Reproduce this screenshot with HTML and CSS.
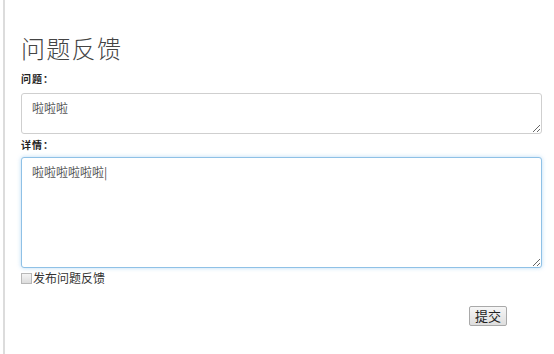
FILE: index.html
```html
<!DOCTYPE html>
<html lang="zh-CN">
<head>
<meta charset="utf-8">
<title>问题反馈</title>
<link rel="stylesheet" href="styles.css">
</head>
<body>
<div class="page">
  <form class="feedback">
    <h1 class="title">问题反馈</h1>
    <label class="field-label label-first">问题：</label>
    <textarea class="field field-short">啦啦啦</textarea>
    <label class="field-label label-next">详情：</label>
    <textarea class="field field-long field-focus">啦啦啦啦啦啦|</textarea>
    <label class="check-row"><span class="check-box"></span>发布问题反馈</label>
    <div class="actions">
      <button type="button" class="submit">提交</button>
    </div>
  </form>
</div>
</body>
</html>
```
FILE: styles.css
```css
html, body {
  margin: 0;
  padding: 0;
  background: #ffffff;
}
body {
  font-family: "Noto Sans CJK SC", "Noto Sans", sans-serif;
  color: #333;
}
.page {
  margin-left: 3px;
  border-left: 2px solid #dcdcdc;
  height: 354px;
  box-sizing: border-box;
  padding: 33px 0 0 16px;
}
.feedback {
  width: 521px;
  display: flex;
  flex-direction: column;
}
.title {
  margin: 0;
  font-size: 24px;
  font-weight: 300;
  line-height: 30px;
  color: #444;
  letter-spacing: 1.3px;
}
.field-label {
  font-size: 10px;
  font-weight: 700;
  line-height: 12px;
  color: #222;
  letter-spacing: 1px;
}
.label-first {
  margin-top: 10px;
}
.label-next {
  margin-top: 5px;
}
.field {
  margin-top: 8px;
  box-sizing: border-box;
  width: 521px;
  border: 1px solid #cfcfcf;
  border-radius: 3px;
  padding: 6px 10px;
  font-family: "Noto Sans CJK SC", sans-serif;
  font-size: 12px;
  line-height: 16px;
  color: #555;
  resize: vertical;
  outline: none;
  background: #fff;
}
.field-short {
  height: 41px;
}
.field-long {
  margin-top: 6px;
  height: 111px;
}
.field-focus {
  border-color: #8fc1e6;
  box-shadow: 0 0 4px rgba(102, 175, 233, 0.45);
}
.check-row {
  display: flex;
  align-items: center;
  margin-top: 2px;
  font-size: 12px;
  line-height: 16px;
  color: #333;
}
.check-box {
  width: 9px;
  height: 9px;
  border: 1px solid #b8b8b8;
  background: linear-gradient(#f4f4f4, #dcdcdc);
  margin-right: 1px;
}
.actions {
  display: flex;
  justify-content: flex-end;
  margin-top: 20px;
  padding-right: 35px;
}
.submit {
  font-family: "Noto Sans CJK SC", sans-serif;
  font-size: 13px;
  line-height: 16px;
  padding: 1px 5px;
  border: 1px solid #a9a9a9;
  border-radius: 2px;
  background: linear-gradient(#f6f6f6, #dedede);
  color: #222;
}
```
